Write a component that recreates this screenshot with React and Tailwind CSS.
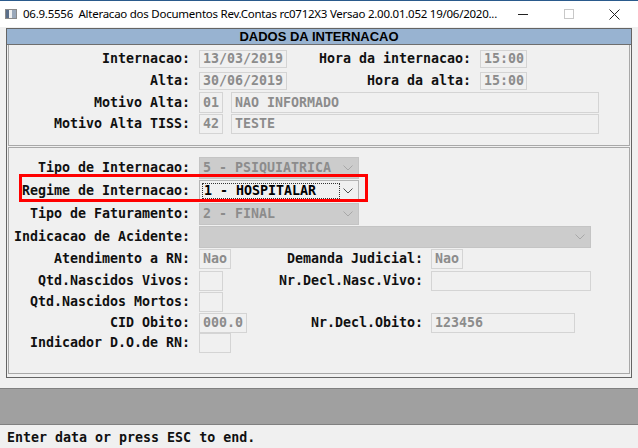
import React from "react";

const MONO = "font-['DejaVu_Sans_Mono',monospace] text-[13.3px] font-bold leading-none";

function Label({ w, children }) {
  return (
    <div className={`${w} shrink-0 text-right text-[#101010] whitespace-pre`}>{children}</div>
  );
}

function Box({ w, h, ml, children }) {
  return (
    <div
      className={`${w} ${h} ${ml} shrink-0 border border-[#d4d4d4] bg-[#f0f0f0] text-[#8c8c8c] pl-[3px] flex items-center whitespace-pre`}
    >
      {children}
    </div>
  );
}

function Chevron({ color }) {
  return (
    <svg width="10" height="6" viewBox="0 0 10 6" className="shrink-0">
      <path d="M0.5 0.5 L5 5 L9.5 0.5" fill="none" stroke={color} strokeWidth="1" />
    </svg>
  );
}

function Select({ w, value }) {
  return (
    <div
      className={`${w} h-[22px] shrink-0 bg-[#cccccc] border border-[#c4c4c4] text-[#8c8c8c] pl-[3px] pr-[5px] flex items-center justify-between whitespace-pre`}
    >
      <span>{value}</span>
      <Chevron color="#a8a8a8" />
    </div>
  );
}

export default function App() {
  return (
    <div className="w-[638px] h-[448px] bg-[#f0f0f0] relative overflow-hidden">
      {/* title bar */}
      <div className="h-[27px] bg-white border-t border-[#2a5a8c] flex items-center font-['Noto_Sans',sans-serif] text-[11.5px] text-black">
        <div className="ml-[5px] w-[12px] h-[10px] border border-[#8a8a8a] bg-[#d8d8d8] flex shrink-0">
          <div className="w-[3px] bg-[#5a6e8a]" />
          <div className="w-[3px] bg-[#f0f0f0]" />
          <div className="w-[4px] bg-[#9aa8ba]" />
        </div>
        <div className="ml-[6px] w-[484px] shrink-0 whitespace-pre tracking-[-0.25px]">
          06.9.5556  Alteracao dos Documentos Rev.Contas rc0712X3 Versao 2.00.01.052 19/06/2020...
        </div>
        <div className="ml-[11px] w-[10px] h-px bg-[#222] shrink-0" />
        <div className="ml-[36px] w-[10px] h-[10px] border border-[#c8c8c8] shrink-0" />
        <svg width="11" height="11" viewBox="0 0 11 11" className="ml-[35px] shrink-0">
          <path d="M0.5 0.5 L10.5 10.5 M10.5 0.5 L0.5 10.5" stroke="#222" strokeWidth="1" />
        </svg>
      </div>

      {/* main frame */}
      <div className={`ml-[6px] mt-px w-[626px] h-[350px] border border-[#646464] flex flex-col ${MONO}`}>
        <div className="h-[16px] bg-[#98b3d1] border-b border-[#6e6e6e] flex items-center justify-center font-['Liberation_Sans',sans-serif] text-[13px] font-bold text-black">
          DADOS DA INTERNACAO
        </div>

        {/* panel 1 */}
        <div className="mx-px h-[101px] border-x border-b border-[#a8a8a8] pt-[5px] flex flex-col">
          <div className="flex items-center h-[18px]">
            <Label w="w-[181px]">Internacao:</Label>
            <Box w="w-[88px]" h="h-[18px]" ml="ml-[9px]">13/03/2019</Box>
            <Label w="w-[184px]">Hora da internacao:</Label>
            <Box w="w-[47px]" h="h-[18px]" ml="ml-[9px]">15:00</Box>
          </div>
          <div className="flex items-center h-[18px] mt-[4px]">
            <Label w="w-[181px]">Alta:</Label>
            <Box w="w-[88px]" h="h-[18px]" ml="ml-[9px]">30/06/2019</Box>
            <Label w="w-[184px]">Hora da alta:</Label>
            <Box w="w-[47px]" h="h-[18px]" ml="ml-[9px]">15:00</Box>
          </div>
          <div className="flex items-center h-[21px] mt-[2px]">
            <Label w="w-[181px]">Motivo Alta:</Label>
            <Box w="w-[24px]" h="h-[21px]" ml="ml-[9px]">01</Box>
            <Box w="w-[368px]" h="h-[21px]" ml="ml-[8px]">NAO INFORMADO</Box>
          </div>
          <div className="flex items-center h-[20px] mt-px">
            <Label w="w-[181px]">Motivo Alta TISS:</Label>
            <Box w="w-[24px]" h="h-[20px]" ml="ml-[9px]">42</Box>
            <Box w="w-[368px]" h="h-[20px]" ml="ml-[8px]">TESTE</Box>
          </div>
        </div>

        {/* panel 2 */}
        <div className="mx-px mt-px h-[227px] border border-[#a8a8a8] pt-[9px] flex flex-col">
          <div className="flex items-center">
            <Label w="w-[181px]">Tipo de Internacao:</Label>
            <div className="ml-[9px]">
              <Select w="w-[160px]" value="5 - PSIQUIATRICA" />
            </div>
          </div>
          <div className="flex items-center mt-px">
            <Label w="w-[181px]">Regime de Internacao:</Label>
            <div className="ml-[9px] w-[160px] h-[22px] bg-[#f0f0f0] border border-[#b4b4b4] flex items-center pl-[2px] pr-[5px]">
              <div className="w-[138px] h-[16px] border border-dotted border-[#333] flex items-center pl-px text-black whitespace-pre">
                1 - HOSPITALAR
              </div>
              <div className="flex-1" />
              <Chevron color="#505050" />
            </div>
          </div>
          <div className="flex items-center mt-px">
            <Label w="w-[181px]">Tipo de Faturamento:</Label>
            <div className="ml-[9px]">
              <Select w="w-[160px]" value="2 - FINAL" />
            </div>
          </div>
          <div className="flex items-center mt-px">
            <Label w="w-[181px]">Indicacao de Acidente:</Label>
            <div className="ml-[9px]">
              <Select w="w-[392px]" value="" />
            </div>
          </div>
          <div className="flex items-center h-[20px] mt-px">
            <Label w="w-[181px]">Atendimento a RN:</Label>
            <Box w="w-[32px]" h="h-[20px]" ml="ml-[9px]">Nao</Box>
            <Label w="w-[192px]">Demanda Judicial:</Label>
            <Box w="w-[32px]" h="h-[20px]" ml="ml-[8px]">Nao</Box>
          </div>
          <div className="flex items-center h-[20px] mt-[2px]">
            <Label w="w-[181px]">Qtd.Nascidos Vivos:</Label>
            <Box w="w-[24px]" h="h-[20px]" ml="ml-[9px]"></Box>
            <Label w="w-[200px]">Nr.Decl.Nasc.Vivo:</Label>
            <Box w="w-[160px]" h="h-[20px]" ml="ml-[8px]"></Box>
          </div>
          <div className="flex items-center h-[20px] mt-px">
            <Label w="w-[181px]">Qtd.Nascidos Mortos:</Label>
            <Box w="w-[24px]" h="h-[20px]" ml="ml-[9px]"></Box>
          </div>
          <div className="flex items-center h-[20px] mt-px">
            <Label w="w-[181px]">CID Obito:</Label>
            <Box w="w-[48px]" h="h-[20px]" ml="ml-[9px]">000.0</Box>
            <Label w="w-[176px]">Nr.Decl.Obito:</Label>
            <Box w="w-[144px]" h="h-[20px]" ml="ml-[8px]">123456</Box>
          </div>
          <div className="flex items-center h-[20px]">
            <Label w="w-[181px]">Indicador D.O.de RN:</Label>
            <Box w="w-[32px]" h="h-[20px]" ml="ml-[9px]"></Box>
          </div>
        </div>
      </div>

      {/* gray bar */}
      <div className="mt-[10px] h-[37px] bg-[#a0a0a0] border-y border-[#808080]" />

      {/* status */}
      <div className={`pl-[7px] pt-[6px] text-[#101010] ${MONO}`}>Enter data or press ESC to end.</div>

      {/* red highlight */}
      <div className="absolute left-[19px] top-[174px] w-[349px] h-[28px] border-[3px] border-[#ff0000]" />
    </div>
  );
}
